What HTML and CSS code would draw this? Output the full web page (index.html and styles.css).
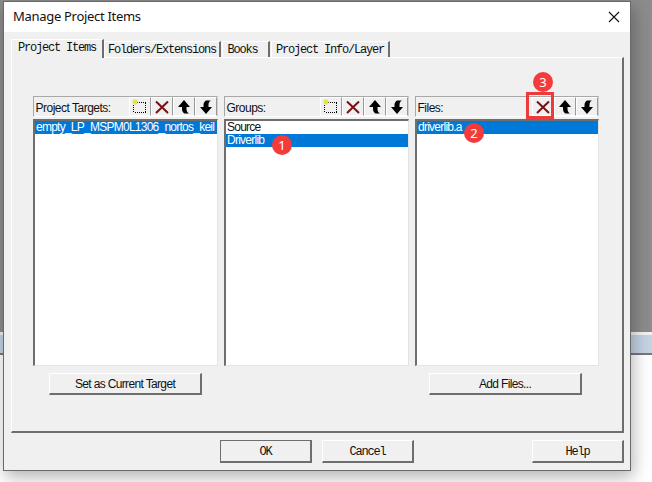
FILE: index.html
```html
<!DOCTYPE html>
<html lang="en">
<head>
<meta charset="utf-8">
<title>Manage Project Items</title>
<link rel="stylesheet" href="styles.css">
</head>
<body>
<svg class="defs" width="0" height="0" aria-hidden="true">
  <symbol id="i-new" viewBox="0 0 16 16">
    <path d="M3 3.5h11M3 13.5h11M1.5 6v7M13.5 4v9" fill="none" stroke="#000" stroke-dasharray="1 1" shape-rendering="crispEdges"/>
    <path d="M3 0v6M0 3h6M1 1l4 4M5 1l-4 4" stroke="#e8dc20" stroke-width="1"/>
  </symbol>
  <symbol id="i-del" viewBox="0 0 16 16">
    <path d="M2 2.5L14 14M14 2.5L2 14" stroke="#7a1010" stroke-width="2" fill="none"/>
  </symbol>
  <symbol id="i-up" viewBox="0 0 16 16">
    <path d="M8 1L14 8H10.5V10C10.5 12 11.5 13.5 13 14.5H8.5C7 13.5 6 12 6 10V8H2Z" fill="#000"/>
  </symbol>
  <symbol id="i-down" viewBox="0 0 16 16">
    <path d="M8 15L2 8H5.5V6C5.5 4 6.5 2.5 8 1.5H13C11 2.5 10.5 4 10.5 6V8H14Z" fill="#000"/>
  </symbol>
</svg>
<div class="desktop">
  <div class="bg-gray"></div>
  <div class="bg-white"></div>
  <div class="bg-blue"></div>
  <div class="bg-line"></div>

  <div class="dialog">
    <header class="titlebar">
      <span class="title">Manage Project Items</span>
      <svg class="close" width="12" height="12" viewBox="0 0 12 12"><path d="M1 1L11 11M11 1L1 11" stroke="#111" stroke-width="1.1"/></svg>
    </header>
    <div class="dialog-body">
      <div class="tabs">
        <span class="tab tab-active tab-items">Project Items</span>
        <span class="tab tab-folders">Folders/Extensions</span>
        <span class="tab tab-books">Books</span>
        <span class="tab tab-info">Project Info/Layer</span>
      </div>
      <section class="pane">
        <div class="columns">
          <div class="column">
            <div class="list-head">
              <span class="head-label">Project Targets:</span>
              <div class="tools">
                <button class="tool"><svg class="icon"><use href="#i-new"/></svg></button>
                <button class="tool"><svg class="icon"><use href="#i-del"/></svg></button>
                <button class="tool"><svg class="icon"><use href="#i-up"/></svg></button>
                <button class="tool"><svg class="icon"><use href="#i-down"/></svg></button>
              </div>
            </div>
            <ul class="list">
              <li class="selected">empty_LP_MSPM0L1306_nortos_keil</li>
            </ul>
            <button class="action action-target">Set as Current Target</button>
          </div>
          <div class="column">
            <div class="list-head">
              <span class="head-label">Groups:</span>
              <div class="tools">
                <button class="tool"><svg class="icon"><use href="#i-new"/></svg></button>
                <button class="tool"><svg class="icon"><use href="#i-del"/></svg></button>
                <button class="tool"><svg class="icon"><use href="#i-up"/></svg></button>
                <button class="tool"><svg class="icon"><use href="#i-down"/></svg></button>
              </div>
            </div>
            <ul class="list">
              <li>Source</li>
              <li class="selected">Driverlib</li>
            </ul>
          </div>
          <div class="column">
            <div class="list-head">
              <span class="head-label">Files:</span>
              <div class="tools">
                <button class="tool"><svg class="icon"><use href="#i-del"/></svg></button>
                <button class="tool"><svg class="icon"><use href="#i-up"/></svg></button>
                <button class="tool"><svg class="icon"><use href="#i-down"/></svg></button>
              </div>
            </div>
            <ul class="list">
              <li class="selected">driverlib.a</li>
            </ul>
            <button class="action action-files">Add Files...</button>
          </div>
        </div>
      </section>
      <footer class="footer">
        <button class="dlg-btn dlg-default">OK</button>
        <button class="dlg-btn">Cancel</button>
        <button class="dlg-btn dlg-help">Help</button>
      </footer>
    </div>
  </div>

  <div class="highlight"></div>
  <span class="badge badge-1">1</span>
  <span class="badge badge-2">2</span>
  <span class="badge badge-3">3</span>
</div>
</body>
</html>
```
FILE: styles.css
```css
* { box-sizing: border-box; }
html, body { margin: 0; padding: 0; }
body { width: 652px; height: 482px; overflow: hidden; background: #fff; font-family: "Liberation Sans", Arial, sans-serif; }
.defs { position: absolute; }
.desktop { position: relative; width: 652px; height: 482px; overflow: hidden; }
.bg-gray { height: 332px; background: #8c8c8c; }
.bg-white { height: 3px; background: #f2f2f2; }
.bg-blue { height: 18px; background: #c3d3e4; }
.bg-line { height: 2px; background: #777; }

.dialog { position: absolute; left: 3px; top: 1px; width: 628px; height: 470px; background: #f0f0f0; border: 1px solid #6a6a6a; box-shadow: 2px 6px 16px rgba(0,0,0,.3); display: flex; flex-direction: column; }
.titlebar { height: 30px; flex: none; background: #fff; display: flex; align-items: center; justify-content: space-between; padding: 0 10px 2px 9px; }
.title { font: 13px "Noto Sans", sans-serif; color: #111; letter-spacing: -.3px; }
.close { margin-top: 1px; }
.dialog-body { flex: 1; display: flex; flex-direction: column; padding: 7px 6px 7px 7px; }

.tabs { display: flex; align-items: flex-end; height: 18px; flex: none; position: relative; z-index: 1; }
.tab { font: 12px "Liberation Mono", monospace; letter-spacing: -1.2px; color: #111; height: 16px; line-height: 17px; text-align: center; border-top: 1px solid #fff; border-left: 1px solid #fff; border-right: 2px solid #6e6e6e; background: #f0f0f0; white-space: nowrap; }
.tab-active { height: 19px; line-height: 17px; margin-bottom: -1px; }
.tab-items { width: 93px; }
.tab-folders { width: 117px; }
.tab-books { width: 48px; margin-left: 1px; padding-right: 6px; }
.tab-info { width: 119px; margin-left: 1px; }

.pane { height: 376px; flex: none; border: 1px solid #fff; border-right: 2px solid #6e6e6e; border-bottom: 2px solid #6e6e6e; padding: 38px 0 0 21px; }
.columns { display: grid; grid-template-columns: 185px 185px 184px; column-gap: 6px; }
.column { display: flex; flex-direction: column; }

.list-head { height: 21px; display: flex; align-items: center; justify-content: space-between; border: 1px solid #a8a8a8; border-right-color: #d0d0d0; border-bottom-color: #fff; padding-left: 1.5px; font-size: 12px; color: #111; }
.head-label { letter-spacing: -.5px; padding-top: 2px; }
.tools { display: flex; gap: 0; height: 19px; }
.tool { width: 22px; height: 19px; padding: 0; background: #f0f0f0; border: 1px solid; border-color: #fff #999 #fff #fff; display: flex; align-items: center; justify-content: center; }
.icon { width: 16px; height: 16px; display: block; }

.list { list-style: none; margin: 2px 0 0; padding: 0; height: 247px; background: #fff; border-top: 2px solid #6e6e6e; border-left: 2px solid #6e6e6e; border-right: 1px solid #e4e4e4; border-bottom: 1px solid #e4e4e4; font-size: 12px; letter-spacing: -.75px; color: #111; }
.list li { height: 13px; line-height: 12px; padding-left: 1px; white-space: nowrap; }
.list li.selected { background: #0078d7; color: #fff; }

.action { width: 153px; height: 22px; margin-top: 7px; padding: 0; font: 12px "Liberation Sans", Arial, sans-serif; letter-spacing: -.65px; color: #111; background: #f0f0f0; border: 1px solid; border-color: #fff #6e6e6e #6e6e6e #fff; border-right-width: 2px; border-bottom-width: 2px; }
.action-target { margin-left: 16px; }
.action-files { margin-left: 14px; }

.footer { display: flex; margin-top: 7px; height: 23px; padding-left: 209px; gap: 10px; }
.dlg-btn { width: 92px; height: 23px; padding: 2px 0 0; font: 12px "Liberation Mono", monospace; letter-spacing: -1.2px; color: #111; background: #f0f0f0; border: 1px solid; border-color: #fff #6e6e6e #6e6e6e #fff; border-right-width: 2px; border-bottom-width: 2px; }
.dlg-default { border-color: #6e6e6e; border-width: 1px 2px 2px 1px; }
.dlg-help { margin-left: auto; }

.highlight { position: absolute; left: 526px; top: 92px; width: 28px; height: 27px; border: 3px solid #ee3a3a; }
.badge { position: absolute; width: 20px; height: 20px; border-radius: 50%; background: #f43b3b; color: #fff; font: 13px/20px "Noto Sans", sans-serif; text-align: center; }
.badge-1 { left: 272px; top: 135px; }
.badge-2 { left: 464px; top: 123px; }
.badge-3 { left: 533px; top: 72px; }
```
